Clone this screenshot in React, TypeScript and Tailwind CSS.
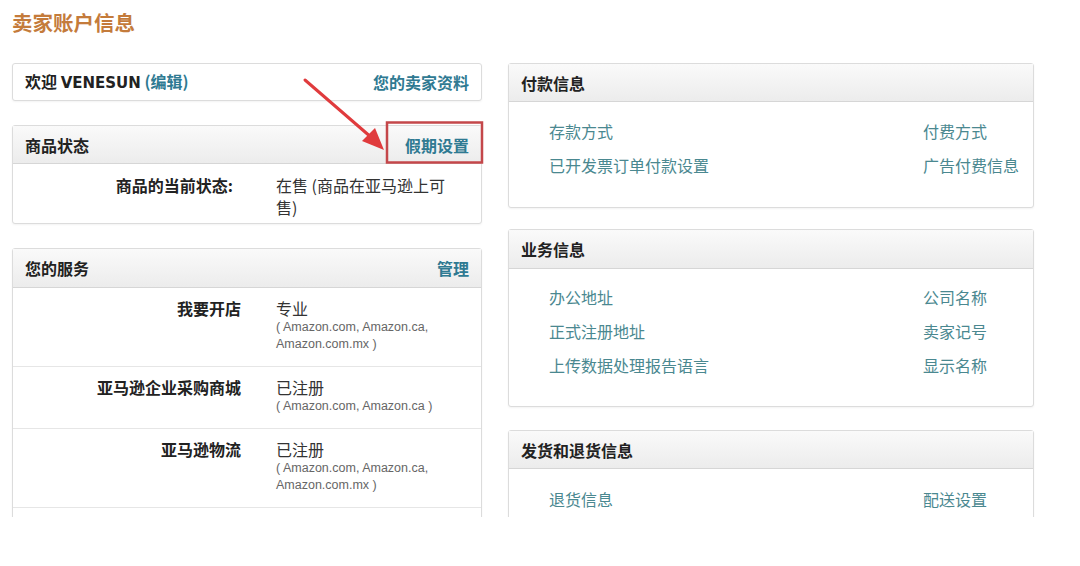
import React from "react"

const cjk = "font-['Noto_Sans_CJK_SC','Noto_Sans',sans-serif]"

type Service = { label: string; value: string; lines: string[] }

const services: Service[] = [
  { label: "我要开店", value: "专业", lines: ["( Amazon.com, Amazon.ca,", "Amazon.com.mx )"] },
  { label: "亚马逊企业采购商城", value: "已注册", lines: ["( Amazon.com, Amazon.ca )"] },
  { label: "亚马逊物流", value: "已注册", lines: ["( Amazon.com, Amazon.ca,", "Amazon.com.mx )"] },
]

function Card({ children, className = "" }: { children: React.ReactNode; className?: string }) {
  return (
    <div className={`shrink-0 rounded-[3px] border border-[#dcdcdc] bg-white shadow-[0_1px_2px_rgba(0,0,0,0.05)] ${className}`}>
      {children}
    </div>
  )
}

function Header({ title, right, h }: { title: string; right?: React.ReactNode; h: string }) {
  return (
    <div
      className={`flex ${h} items-center justify-between border-b border-[#d6d6d6] bg-gradient-to-b from-[#fafafa] to-[#ececec] px-[12px] text-[16px] font-bold text-[#222]`}
    >
      <span>{title}</span>
      {right}
    </div>
  )
}

function LinkGrid({ rows, pt, pb }: { rows: [string, string][]; pt: string; pb: string }) {
  return (
    <div className={`grid grid-cols-[374px_1fr] gap-y-[12px] pl-[40px] ${pt} ${pb} text-[16px] leading-[22px] text-[#4a8890]`}>
      {rows.map(([a, b]) => (
        <React.Fragment key={a}>
          <span>{a}</span>
          <span>{b}</span>
        </React.Fragment>
      ))}
    </div>
  )
}

export default function App() {
  return (
    <div className={`relative h-[566px] w-[1080px] overflow-hidden bg-white ${cjk}`}>
      <h1 className="pl-[12px] pt-[9px] text-[20.5px] font-bold leading-[26px] text-[#c47b3b]">卖家账户信息</h1>

      <div className="mt-[28px] flex h-[454px] gap-[26px] overflow-hidden pl-[12px]">
        {/* left column */}
        <div className="flex w-[470px] shrink-0 flex-col gap-[24px]">
          <Card className="flex h-[38px] items-center justify-between px-[12px] text-[16px] font-bold">
            <span className="text-[#222]">
              欢迎 <span className="font-['DejaVu_Sans',sans-serif] text-[15px]">VENESUN</span>{" "}
              <span className="text-[#2f7a92]">(编辑)</span>
            </span>
            <span className="text-[#2f7a92]">您的卖家资料</span>
          </Card>

          <Card>
            <Header title="商品状态" h="h-[38px]" right={<span className="text-[#2f7a92]">假期设置</span>} />
            <div className="flex pb-[5px] pt-[10px] text-[16px] leading-[22px]">
              <div className="w-[220px] text-right font-bold text-[#222]">商品的当前状态:</div>
              <div className="ml-[43px] w-[172px] text-[#333]">在售 (商品在亚马逊上可售)</div>
            </div>
          </Card>

          <Card className="pb-[20px]">
            <Header title="您的服务" h="h-[39px]" right={<span className="text-[#2f7a92]">管理</span>} />
            {services.map((s, i) => (
              <div key={i} className="flex border-b border-[#e6e6e6] pb-[13px] pt-[9px]">
                <div className="w-[228px] text-right text-[16px] font-bold leading-[22px] text-[#222]">{s.label}</div>
                <div className="ml-[35px]">
                  <div className="text-[16px] leading-[22px] text-[#333]">{s.value}</div>
                  {s.lines.map((l) => (
                    <div key={l} className="font-['Liberation_Sans',sans-serif] text-[12.5px] leading-[17px] text-[#666]">
                      {l}
                    </div>
                  ))}
                </div>
              </div>
            ))}
          </Card>
        </div>

        {/* right column */}
        <div className="flex w-[526px] shrink-0 flex-col">
          <Card>
            <Header title="付款信息" h="h-[38px]" />
            <LinkGrid
              pt="pt-[18px]"
              pb="pb-[31px]"
              rows={[
                ["存款方式", "付费方式"],
                ["已开发票订单付款设置", "广告付费信息"],
              ]}
            />
          </Card>

          <Card className="mt-[21px]">
            <Header title="业务信息" h="h-[39px]" />
            <LinkGrid
              pt="pt-[17px]"
              pb="pb-[30px]"
              rows={[
                ["办公地址", "公司名称"],
                ["正式注册地址", "卖家记号"],
                ["上传数据处理报告语言", "显示名称"],
              ]}
            />
          </Card>

          <Card className="mt-[23px]">
            <Header title="发货和退货信息" h="h-[38px]" />
            <LinkGrid pt="pt-[19px]" pb="pb-[30px]" rows={[["退货信息", "配送设置"]]} />
          </Card>
        </div>
      </div>

      {/* annotation: arrow and red box */}
      <svg className="pointer-events-none absolute left-0 top-0" width="1080" height="566">
        <line x1="305" y1="80" x2="372" y2="138" stroke="#e03b3d" strokeWidth="3" strokeLinecap="round" />
        <polygon points="384,150 362,141 375,128" fill="#e03b3d" />
        <rect x="387" y="122.5" width="95" height="40" fill="none" stroke="#c4474a" strokeWidth="2.5" />
      </svg>
    </div>
  )
}
